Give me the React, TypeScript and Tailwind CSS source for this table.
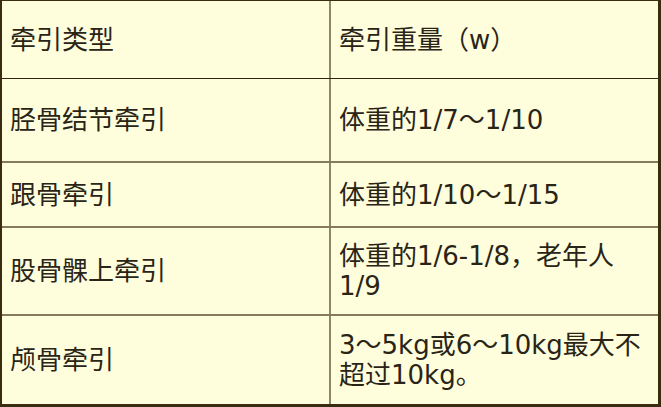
import React from 'react';

const rows: { type: string; weight: React.ReactNode; h: string }[] = [
	{ type: '胫骨结节牵引', weight: '体重的1/7～1/10', h: 'h-[84px]' },
	{ type: '跟骨牵引', weight: '体重的1/10～1/15', h: 'h-[65px]' },
	{
		type: '股骨髁上牵引',
		weight: (
			<>
				体重的1/6-1/8，老年人
				<br />
				1/9
			</>
		),
		h: 'h-[88px]'
	},
	{
		type: '颅骨牵引',
		weight: (
			<>
				3～5kg或6～10kg最大不
				<br />
				超过10kg。
			</>
		),
		h: 'h-[88px]'
	}
];

export default function App() {
	return (
		<div
			className="w-[661px] h-[407px] bg-[#fefedd] text-[#2a2416] text-[26px] leading-[30px] border-t border-l-2 border-r-[3px] border-b-[3px] border-[#3a2c10] flex flex-col"
			style={{ fontFamily: '"DejaVu Sans", "Noto Sans CJK SC", sans-serif' }}
		>
			{/* header */}
			<div className="flex h-[78px] border-b border-[#2e2410]">
				<div className="w-[327px] flex items-center pl-2">牵引类型</div>
				<div className="flex-1 flex items-center pl-[8px] border-l-2 border-[#8c8766]">牵引重量（w）</div>
			</div>

			{rows.map((row, i) => (
				<div
					key={row.type}
					className={`flex ${row.h} ${i < rows.length - 1 ? 'border-b-2 border-[#857b5c]' : ''}`}
				>
					<div className="w-[327px] flex items-center pl-2">{row.type}</div>
					<div className="flex-1 flex items-center pl-[8px] border-l-2 border-[#8c8766]">
						<div>{row.weight}</div>
					</div>
				</div>
			))}
		</div>
	);
}
